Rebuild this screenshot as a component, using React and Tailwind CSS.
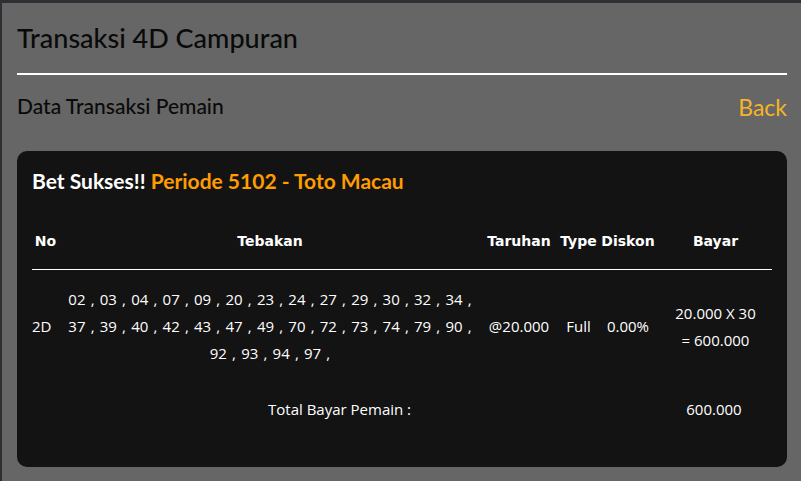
import React from "react";

const cols = "grid grid-cols-[30px_416px_82px_37px_62px_113px]";

export default function App() {
  return (
    <div className="min-h-screen w-full bg-[#666666] border-t-[3px] border-l-[2px] border-[#2e3033] pl-[15px] pr-[14px] font-['Lato',sans-serif]">
      <h1 className="mt-[17px] text-[27px] leading-[36px] text-[#0a0a0a] font-medium">
        Transaksi 4D Campuran
      </h1>
      <div className="mt-[17px] h-[2px] bg-white" />
      <div className="mt-[17px] flex items-center justify-between h-[28px]">
        <div className="text-[21px] leading-[28px] text-[#0a0a0a] font-medium">Data Transaksi Pemain</div>
        <div className="text-[23px] leading-[28px] text-[#f6b526] mt-[2px]">Back</div>
      </div>
      <div className="mt-[31px] rounded-[10px] bg-[#131313] px-[15px] pt-[16px] pb-[44px]">
        <div className="text-[21px] leading-[28px] font-bold text-white">
          Bet Sukses!! <span className="text-[#ff9c00]">Periode 5102 - Toto Macau</span>
        </div>
        <div className="mt-[18px] font-['Open_Sans',sans-serif] text-white text-[15px]">
          <div className={`${cols} h-[57px] items-center border-b border-white font-['DejaVu_Sans',sans-serif] font-bold text-[14px]`}>
            <div className="text-center pr-[3px]">No</div>
            <div className="text-center">Tebakan</div>
            <div className="text-center">Taruhan</div>
            <div className="text-center">Type</div>
            <div className="text-center">Diskon</div>
            <div className="text-center">Bayar</div>
          </div>
          <div className={`${cols} items-center pt-[16px] pb-[14px] leading-[27px]`}>
            <div className="text-left">2D</div>
            <div className="text-center [word-spacing:1.3px]">
              <div>02 , 03 , 04 , 07 , 09 , 20 , 23 , 24 , 27 , 29 , 30 , 32 , 34 ,</div>
              <div>37 , 39 , 40 , 42 , 43 , 47 , 49 , 70 , 72 , 73 , 74 , 79 , 90 ,</div>
              <div>92 , 93 , 94 , 97 ,</div>
            </div>
            <div className="text-center">@20.000</div>
            <div className="text-center">Full</div>
            <div className="text-center">0.00%</div>
            <div className="text-center">
              <div>20.000 X 30</div>
              <div>= 600.000</div>
            </div>
          </div>
          <div className={`${cols} items-center pt-[15px] leading-[27px]`}>
            <div className="col-span-5 pl-[236px]">Total Bayar Pemain :</div>
            <div className="text-center pr-[3px]">600.000</div>
          </div>
        </div>
      </div>
    </div>
  );
}
